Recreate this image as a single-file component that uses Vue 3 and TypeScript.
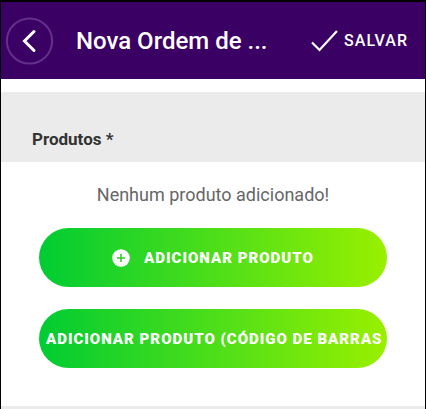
<script setup lang="ts">
import { ref } from 'vue'

const title = ref('Nova Ordem de ...')
const products = ref<string[]>([])
</script>

<template>
  <div class="screen">
    <header class="bar">
      <button class="back" type="button" aria-label="Voltar">
        <svg width="48" height="48" viewBox="0 0 48 48" fill="none">
          <circle cx="24.5" cy="24" r="22.6" stroke="#63308a" stroke-width="2" />
          <path d="M29 14.5 19.5 24 29 33.5" stroke="#fff" stroke-width="3" stroke-linecap="round" />
        </svg>
      </button>
      <h1 class="title">{{ title }}</h1>
      <button class="save" type="button">
        <svg width="28" height="24" viewBox="0 0 28 24" fill="none">
          <path d="M1 13.5 8.5 21 26 2" stroke="#fff" stroke-width="2.2" />
        </svg>
        <span>SALVAR</span>
      </button>
    </header>

    <main>
      <h2 class="section">Produtos *</h2>
      <div class="body">
        <p v-if="products.length === 0" class="empty">Nenhum produto adicionado!</p>
        <button class="pill" type="button">
          <svg width="18" height="18" viewBox="0 0 18 18" fill="none">
            <circle cx="9" cy="9" r="8.8" fill="#fff" />
            <path d="M9 5v8M5 9h8" stroke="#2fcf28" stroke-width="1.6" />
          </svg>
          <span>ADICIONAR PRODUTO</span>
        </button>
        <button class="pill pill-long" type="button">
          <span>ADICIONAR PRODUTO (CÓDIGO DE BARRAS</span>
        </button>
      </div>
    </main>
    <footer class="next"></footer>
  </div>
</template>

<style>
body {
  margin: 0;
  background: #fff;
}
</style>

<style scoped>
.screen {
  box-sizing: border-box;
  min-height: 100vh;
  display: flex;
  flex-direction: column;
  border: 1px solid #000;
  border-top-width: 2px;
  border-bottom: 0;
  background: #fff;
  font-family: Roboto, "Liberation Sans", sans-serif;
}

button {
  border: 0;
  padding: 0;
  background: none;
  color: #fff;
  font-family: inherit;
  cursor: pointer;
}

.bar {
  box-sizing: border-box;
  height: 77px;
  display: flex;
  align-items: center;
  padding: 0 17px 0 4px;
  background: #3b0064;
  color: #fff;
}

.back {
  display: flex;
  margin-right: 23px;
}

.title {
  flex: 1;
  min-width: 0;
  margin: 0;
  overflow: hidden;
  white-space: nowrap;
  font-size: 24px;
  line-height: 32px;
  font-weight: 500;
}

.save {
  display: flex;
  align-items: center;
  gap: 5px;
  font-size: 16px;
  line-height: 24px;
  font-weight: 500;
  letter-spacing: 1px;
}

.section {
  margin: 13px 0 0;
  padding: 35px 31px 11px;
  background: #ebebeb;
  color: #333;
  font-size: 17px;
  line-height: 24px;
  font-weight: 700;
}

.body {
  display: flex;
  flex-direction: column;
  gap: 22px;
  padding: 22px 38px 38px;
}

.empty {
  margin: 0;
  text-align: center;
  color: #666;
  font-size: 18px;
  line-height: 22px;
}

.pill {
  height: 59px;
  display: flex;
  align-items: center;
  justify-content: center;
  gap: 14px;
  overflow: hidden;
  border-radius: 30px;
  background: linear-gradient(90deg, #00cc33, #99f000);
  font-size: 15px;
  line-height: 24px;
  font-weight: 900;
  letter-spacing: 1px;
  white-space: nowrap;
}

.pill-long {
  justify-content: flex-start;
  padding-left: 7px;
}

.next {
  flex: 1;
  background: #ebebeb;
}
</style>
